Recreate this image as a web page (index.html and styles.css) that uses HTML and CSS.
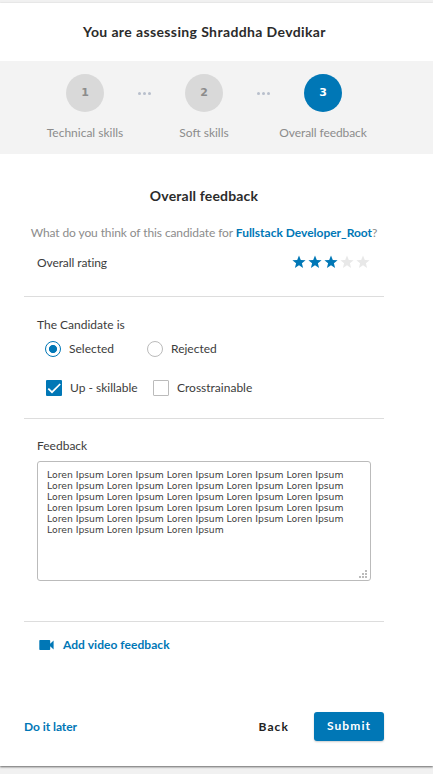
FILE: index.html
```
<!DOCTYPE html>
<html lang="en">
<head>
<meta charset="utf-8">
<title>Overall feedback</title>
<link rel="stylesheet" href="styles.css">
</head>
<body>
<main class="panel">
  <header class="title">You are assessing Shraddha Devdikar</header>
  <nav class="steps">
    <div class="step"><span class="num">1</span><span>Technical skills</span></div>
    <div class="dots"><i></i><i></i><i></i></div>
    <div class="step"><span class="num">2</span><span>Soft skills</span></div>
    <div class="dots"><i></i><i></i><i></i></div>
    <div class="step"><span class="num active">3</span><span class="tight">Overall feedback</span></div>
  </nav>
  <div class="content">
    <h2>Overall feedback</h2>
    <p class="question">What do you think of this candidate for <b>Fullstack Developer_Root</b>?</p>
    <section class="rating">
      <span class="tight">Overall rating</span>
      <svg class="stars" width="80" height="16" viewBox="0 0 80 16">
        <defs><path id="star" d="M8 1.400 9.800 5.900l4.800.300-3.700 3.100 1.200 4.700L8 11.300 3.900 14l1.200-4.700L1.400 6.200l4.800-.3z"/></defs>
        <g fill="#0077b6"><use href="#star"/><use href="#star" x="16"/><use href="#star" x="32"/></g>
        <g fill="#e8e8e8"><use href="#star" x="48"/><use href="#star" x="64"/></g>
      </svg>
    </section>
    <section class="candidate">
      <div>The Candidate is</div>
      <div class="options radios">
        <span class="radio on"></span><span class="label">Selected</span>
        <span class="radio"></span><span>Rejected</span>
      </div>
      <div class="options checks">
        <span class="check on"><svg width="16" height="16" viewBox="0 0 16 16"><path d="M2.300 8.600 6 12.200 14.200 4" fill="none" stroke="#fff" stroke-width="1.700"/></svg></span><span class="label">Up - skillable</span>
        <span class="check"></span><span>Crosstrainable</span>
      </div>
    </section>
    <section class="feedback">
      <div>Feedback</div>
      <div class="textbox">Loren Ipsum Loren Ipsum Loren Ipsum Loren Ipsum Loren Ipsum Loren Ipsum Loren Ipsum Loren Ipsum Loren Ipsum Loren Ipsum Loren Ipsum Loren Ipsum Loren Ipsum Loren Ipsum Loren Ipsum Loren Ipsum Loren Ipsum Loren Ipsum Loren Ipsum Loren Ipsum Loren Ipsum Loren Ipsum Loren Ipsum Loren Ipsum Loren Ipsum Loren Ipsum Loren Ipsum Loren Ipsum
        <svg class="grip" width="8" height="8" viewBox="0 0 8 8"><path fill="#bbb" d="M6 0h2v2H6zM3 3h2v2H3zM6 3h2v2H6zM0 6h2v2H0zM3 6h2v2H3zM6 6h2v2H6z"/></svg>
      </div>
    </section>
    <a class="video"><svg width="15" height="10" viewBox="0 0 15 10"><path fill="#0077b6" d="M1 0h9.500a.7.7 0 0 1 .7.700V3.800L14.600.500v9L11.200 6.200V9.300a.7.7 0 0 1-.7.700H1a.7.7 0 0 1-.7-.700V.700A.7.700 0 0 1 1 0z"/></svg><span>Add video feedback</span></a>
    <footer><a class="later">Do it later</a><a class="back">Back</a><a class="submit">Submit</a></footer>
  </div>
</main>
</body>
</html>
```
FILE: styles.css
```
* { box-sizing: border-box; }
body { margin: 0; padding-top: 3px; height: 774px; overflow: hidden; background: #f1f1f1; color: #3c3c3c; font: 12px/18px Lato, "Open Sans", sans-serif; }
.panel { height: 763px; background: #fff; box-shadow: 0 1px 2px #666; }
.title { height: 58px; padding: 20px 24px 0 0; text-align: center; font-size: 14px; font-weight: 700; letter-spacing: .38px; color: #2b2b2b; }
.tight { letter-spacing: -.09px; }
.steps { height: 93px; background: #f3f3f3; display: flex; padding: 13px 0 0 25.500px; color: #8c8c8c; }
.step { width: 119px; display: flex; flex: none; flex-direction: column; align-items: center; gap: 12px; }
.num { width: 38px; height: 38px; border-radius: 50%; background: #d9d9d9; font: 700 11px/38px "DejaVu Sans", sans-serif; text-align: center; }
.num.active { background: #0077b6; color: #fff; }
.dots { width: 0; height: 38px; display: flex; flex: none; align-items: center; justify-content: center; gap: 2px; }
.dots i { width: 3px; height: 3px; border-radius: 50%; background: #b8bfcc; flex: none; }
.content { width: 360px; margin-left: 24px; padding-top: 33px; }
h2 { margin: 0; font-size: 14px; line-height: 18px; letter-spacing: .17px; text-align: center; color: #2b2b2b; }
.question { margin: 19px 0 0; text-align: center; color: #8c8c8c; white-space: nowrap; letter-spacing: -.1px; }
.question b { color: #0077b6; letter-spacing: -.01px; }
.rating { height: 55px; padding: 12px 13px 0; display: flex; justify-content: space-between; border-bottom: 1px solid #ddd; }
.candidate { height: 122px; padding: 19px 13px 0; border-bottom: 1px solid #ddd; }
.options { display: flex; align-items: center; height: 18px; }
.radios { margin: 6px 0 0 8px; }
.radios .label { width: 78px; }
.checks { margin: 21px 0 0 9px; }
.checks .label { width: 83px; }
.radio, .check { width: 16px; height: 16px; flex: none; border: 1px solid #bbb; margin-right: 8px; }
.radio { border-radius: 50%; }
.radio.on { border-color: #0077b6; background: radial-gradient(circle, #0077b6 3.700px, #fff 4.400px); }
.check { border-radius: 1px; }
.check.on { border: 0; background: #0077b6; }
.check svg { display: block; }
.feedback { height: 203px; padding: 18px 13px 0; border-bottom: 1px solid #ddd; }
.textbox { position: relative; height: 120px; width: 334px; margin-top: 6px; padding: 7px 9px; border: 1px solid #bbb; border-radius: 3px; font: 9.240px/11px "DejaVu Sans", sans-serif; }
.grip { position: absolute; right: 3px; bottom: 2px; }
.video { display: flex; align-items: center; margin: 14px 0 0 15px; gap: 9px; color: #0077b6; font-weight: 700; letter-spacing: .05px; }
footer { display: flex; align-items: center; margin-top: 58px; font-weight: 700; line-height: 28px; }
.later { color: #0077b6; letter-spacing: -.05px; }
.back { margin-left: auto; margin-right: 25px; color: #222; letter-spacing: 1.100px; }
.submit { width: 70px; height: 29px; border-radius: 3px; background: #0077b6; color: #fff; text-align: center; letter-spacing: 1.100px; box-shadow: 0 1px 2px #0003; }
```
